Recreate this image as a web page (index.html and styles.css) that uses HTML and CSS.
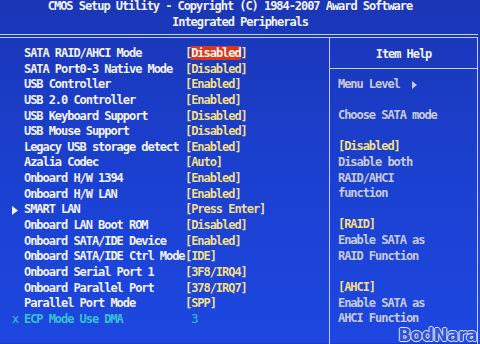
FILE: index.html
```html
<!DOCTYPE html>
<html lang="en">
<head>
  <meta charset="UTF-8">
  <meta name="viewport" content="width=device-width, initial-scale=1.0">
  <title>CMOS Setup Utility - Integrated Peripherals</title>
  <link rel="stylesheet" href="styles.css">
</head>
<body>
  <div class="screen">
    <!-- Title bar -->
    <header class="title">
      <div class="title-line first">CMOS Setup Utility - Copyright (C) 1984-2007 Award Software</div>
      <div class="title-line">Integrated Peripherals</div>
    </header>

    <div class="frame">
      <!-- Settings list -->
      <div class="menu">
        <div class="row"><span class="mark"></span><span class="label">SATA RAID/AHCI Mode</span><span class="value">[<span class="sel">Disabled</span>]</span></div>
        <div class="row"><span class="mark"></span><span class="label">SATA Port0-3 Native Mode</span><span class="value">[Disabled]</span></div>
        <div class="row"><span class="mark"></span><span class="label">USB Controller</span><span class="value">[Enabled]</span></div>
        <div class="row"><span class="mark"></span><span class="label">USB 2.0 Controller</span><span class="value">[Enabled]</span></div>
        <div class="row"><span class="mark"></span><span class="label">USB Keyboard Support</span><span class="value">[Disabled]</span></div>
        <div class="row"><span class="mark"></span><span class="label">USB Mouse Support</span><span class="value">[Disabled]</span></div>
        <div class="row"><span class="mark"></span><span class="label">Legacy USB storage detect</span><span class="value">[Enabled]</span></div>
        <div class="row"><span class="mark"></span><span class="label">Azalia Codec</span><span class="value">[Auto]</span></div>
        <div class="row"><span class="mark"></span><span class="label">Onboard H/W 1394</span><span class="value">[Enabled]</span></div>
        <div class="row"><span class="mark"></span><span class="label">Onboard H/W LAN</span><span class="value">[Enabled]</span></div>
        <div class="row"><span class="mark"><svg width="6" height="9" viewBox="0 0 6 9"><path d="M0 0 L6 4.5 L0 9 Z" fill="#f2f2f4"/></svg></span><span class="label">SMART LAN</span><span class="value">[Press Enter]</span></div>
        <div class="row"><span class="mark"></span><span class="label">Onboard LAN Boot ROM</span><span class="value">[Disabled]</span></div>
        <div class="row"><span class="mark"></span><span class="label">Onboard SATA/IDE Device</span><span class="value">[Enabled]</span></div>
        <div class="row"><span class="mark"></span><span class="label">Onboard SATA/IDE Ctrl Mode</span><span class="value">[IDE]</span></div>
        <div class="row"><span class="mark"></span><span class="label">Onboard Serial Port 1</span><span class="value">[3F8/IRQ4]</span></div>
        <div class="row"><span class="mark"></span><span class="label">Onboard Parallel Port</span><span class="value">[378/IRQ7]</span></div>
        <div class="row"><span class="mark"></span><span class="label">Parallel Port Mode</span><span class="value">[SPP]</span></div>
        <div class="row off"><span class="mark">x</span><span class="label">ECP Mode Use DMA</span><span class="value"> 3</span></div>
      </div>

      <!-- Help panel -->
      <div class="help">
        <div class="help-head">Item Help</div>
        <div class="help-body">
          <div class="help-line">Menu Level  <svg width="5" height="8" viewBox="0 0 5 8"><path d="M0 0 L5 4 L0 8 Z" fill="#c9cbdc"/></svg></div>
          <div class="help-line"></div>
          <div class="help-line">Choose SATA mode</div>
          <div class="help-line"></div>
          <div class="help-line opt">[Disabled]</div>
          <div class="help-line">Disable both</div>
          <div class="help-line">RAID/AHCI</div>
          <div class="help-line">function</div>
          <div class="help-line"></div>
          <div class="help-line opt">[RAID]</div>
          <div class="help-line">Enable SATA as</div>
          <div class="help-line">RAID Function</div>
          <div class="help-line"></div>
          <div class="help-line opt">[AHCI]</div>
          <div class="help-line">Enable SATA as</div>
          <div class="help-line">AHCI Function</div>
        </div>
      </div>
    </div>

    <!-- Watermark -->
    <div class="logo">BodNara</div>
  </div>
</body>
</html>
```

FILE: styles.css
```css
html, body {
  margin: 0;
  padding: 0;
}

body {
  width: 480px;
  height: 344px;
  overflow: hidden;
  background: #1b3bc4;
}

/* The whole BIOS screen */
.screen {
  position: relative;
  width: 480px;
  height: 344px;
  background: linear-gradient(#1a36b6, #1b41d2 55%, #1d47e0);
  font-family: "DejaVu Sans Mono", "Liberation Mono", monospace;
  font-weight: bold;
  font-size: 12px;
  letter-spacing: -1.05px;
  color: #f2f2f4;
}

.title-line,
.label,
.value,
.help-line {
  white-space: pre;
}

.title {
  margin-top: -1px;
  text-align: center;
  line-height: 15.5px;
}

.title-line.first {
  padding-right: 20px;
}

/* double rule under the title, then two panels */
.frame {
  margin-top: 4px;
  width: 478px;
  border-top: 4px double #c4cdf2;
  display: grid;
  grid-template-columns: 330px 1fr;
  height: 310px;
}

.menu {
  border-right: 1px solid #c4cdf2;
  padding-top: 8px;
}

.row {
  display: grid;
  grid-template-columns: 24px 161px auto;
  line-height: 15.65px;
  height: 15.65px;
}

.mark {
  padding-left: 12px;
  display: flex;
  align-items: center;
}

.value {
  color: #f3df86;
}

.sel {
  background: #d8381c;
  color: #fff4f0;
}

.row.off,
.row.off .value {
  color: #36c3cf;
  font-weight: normal;
}

.row.off .label {
  font-weight: bold;
}

/* Item Help panel */
.help {
  border-right: 1px solid #c4cdf2;
}

.help-head {
  text-align: center;
  line-height: 15.65px;
  padding-top: 9px;
  padding-bottom: 5px;
  border-bottom: 1px solid #c4cdf2;
}

.help-body {
  padding-top: 8px;
  padding-left: 8px;
  color: #c9cbdc;
}

.help-line {
  line-height: 15.65px;
  height: 15.65px;
}

.help-line svg {
  vertical-align: -1px;
}

.help-line.opt {
  color: #f3df86;
}

/* photo watermark, sits over the corner */
.logo {
  position: absolute;
  right: 3px;
  bottom: -2px;
  font-family: "DejaVu Sans", sans-serif;
  font-weight: bold;
  font-size: 17px;
  letter-spacing: -0.5px;
  color: #2f52d8;
  text-shadow: 1px 0 0 #dfe6ff, -1px 0 0 #dfe6ff, 0 1px 0 #dfe6ff, 0 -1px 0 #dfe6ff;
}
```
